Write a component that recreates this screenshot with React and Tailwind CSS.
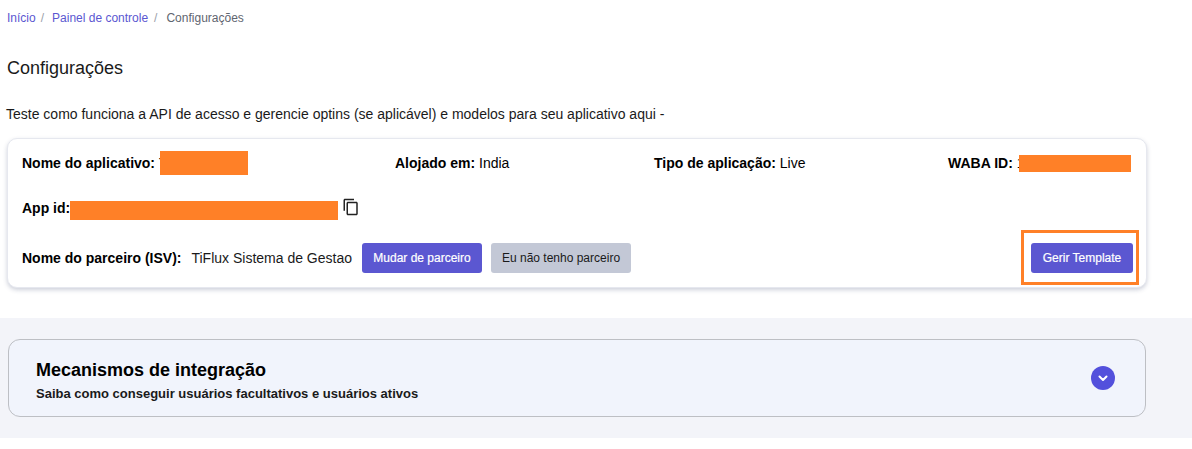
import React from "react";

const Redact = ({ className }) => <span className={`inline-block bg-[#ff8027] ${className}`} />;

export default function App() {
  return (
    <div className="w-[1192px] h-[449px] overflow-hidden bg-white font-['Liberation_Sans',Arial,sans-serif] text-black">
      <nav className="flex items-center h-[12px] mt-[12px] ml-[7px] text-[12px] leading-[12px]">
        <span className="text-[#5b57d1]">Início</span>
        <span className="text-[#9aa0aa] ml-[5px]">/</span>
        <span className="text-[#5b57d1] ml-[8px]">Painel de controle</span>
        <span className="text-[#9aa0aa] ml-[6px]">/</span>
        <span className="text-[#5f6670] ml-[9px]">Configurações</span>
      </nav>
      <h1 className="mt-[32px] ml-[7px] text-[18px] leading-[24px] font-normal text-[#1a1a1a]">Configurações</h1>
      <p className="mt-[26px] ml-[6px] text-[14px] leading-[16px] text-[#1a1a1a]">
        Teste como funciona a API de acesso e gerencie optins (se aplicável) e modelos para seu aplicativo aqui -
      </p>

      <section className="relative mt-[16px] ml-[7px] w-[1140px] h-[150px] rounded-[10px] bg-white border border-[#e6e8ef] shadow-[0_2px_4px_rgba(60,70,110,0.25)] px-[14px] text-[14px]">
        <div className="flex items-center h-[48px]">
          <div className="w-[373px] flex items-center">
            <span className="font-bold">Nome do aplicativo:</span>
            <span className="ml-[4px]">T</span>
            <Redact className="-ml-[8px] w-[88px] h-[24px]" />
          </div>
          <div className="w-[259px]">
            <span className="font-bold">Alojado em:</span> India
          </div>
          <div className="w-[294px]">
            <span className="font-bold">Tipo de aplicação:</span> Live
          </div>
          <div className="flex items-center">
            <span className="font-bold">WABA ID:</span>
            <span className="ml-[4px]">1</span>
            <Redact className="-ml-[6px] w-[112px] h-[17px]" />
          </div>
        </div>
        <div className="flex items-center h-[42px]">
          <span className="font-bold">App id:</span>
          <Redact className="mt-[5px] w-[268px] h-[19px]" />
          <svg className="ml-[4px] -mt-[3px] text-[#222]" width="18" height="18" viewBox="0 0 24 24" fill="currentColor">
            <path d="M16 1H4c-1.1 0-2 .9-2 2v14h2V3h12V1zm3 4H8c-1.1 0-2 .9-2 2v14c0 1.1.9 2 2 2h11c1.100 0 2-.9 2-2V7c0-1.100-.9-2-2-2zm0 16H8V7h11v14z" />
          </svg>
        </div>
        <div className="flex items-center h-[50px] mt-[4px]">
          <span className="font-bold">Nome do parceiro (ISV):</span>
          <span className="ml-[10px] text-[#1a1a1a]">TiFlux Sistema de Gestao</span>
          <button className="ml-[10px] h-[30px] w-[120px] rounded-[3px] bg-[#5b57d1] text-white text-[12px] [-webkit-text-stroke:0.2px_white]">Mudar de parceiro</button>
          <button className="ml-[9px] h-[30px] w-[140px] rounded-[3px] bg-[#c3c8d6] text-[#1a1a1a] text-[12px]">Eu não tenho parceiro</button>
          <button className="ml-auto -mr-px h-[30px] w-[102px] rounded-[3px] bg-[#5b57d1] text-white text-[12px] [-webkit-text-stroke:0.2px_white]">Gerir Template</button>
        </div>
        <div className="absolute left-[1013px] top-[91px] w-[118px] h-[55px] border-[3px] border-[#ff8027]" />
      </section>

      <section className="mt-[30px] h-[120px] bg-[#f3f4f9] pt-[21px] pl-[8px]">
        <div className="w-[1138px] h-[78px] rounded-[12px] border border-[#bdbfc4] bg-[#f1f4fc] flex items-center justify-between pl-[27px] pr-[30px]">
          <div>
            <h2 className="text-[18px] leading-[22px] font-bold mt-[4px]">Mecanismos de integração</h2>
            <p className="mt-[5px] text-[13px] leading-[16px] font-bold text-[#1a1a1a]">Saiba como conseguir usuários facultativos e usuários ativos</p>
          </div>
          <span className="flex items-center justify-center w-[24px] h-[24px] rounded-full bg-[#5350dc]">
            <svg width="14" height="14" viewBox="0 0 24 24" fill="none" stroke="white" strokeWidth="3.5" strokeLinecap="round" strokeLinejoin="round">
              <path d="M6 9.500l6 6 6-6" />
            </svg>
          </span>
        </div>
      </section>
    </div>
  );
}
